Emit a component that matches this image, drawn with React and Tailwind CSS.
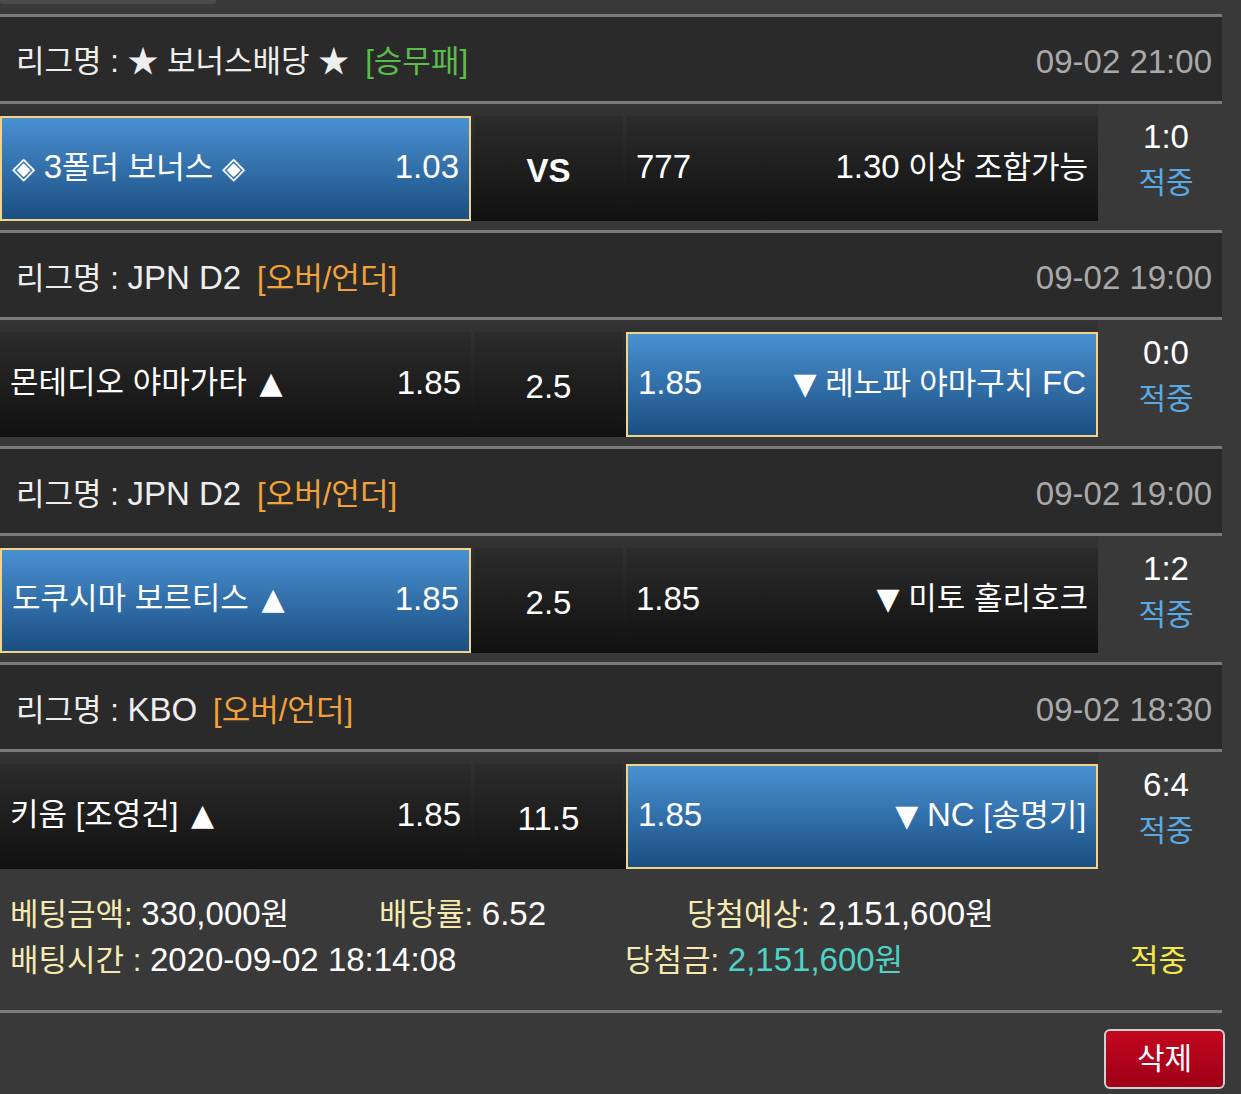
import React from "react";

const FONT = { fontFamily: '"Liberation Sans", "Noto Sans CJK KR", sans-serif' };

function N({ children, className = "" }) {
  return <span className={"text-[33px] " + className}>{children}</span>;
}

function Tri({ up }) {
  return (
    <span className={"font-['DejaVu_Sans'] text-[30px] " + (up ? "ml-[4px]" : "")}>{up ? "▲" : "▼"}</span>
  );
}

function Dia() {
  return <span className="font-['DejaVu_Sans'] text-[30px]">◈</span>;
}

function Line() {
  return <div className="h-[3px] w-[1222px] bg-[#7a7a7a]" />;
}

function Header({ label, tag, tagColor, date }) {
  return (
    <div className="flex h-[84px] w-[1222px] items-center justify-between bg-[#2a2a2a] pl-[16px] pr-[10px] pt-[5px]">
      <div className="flex items-baseline text-[#eeeeee]">
        <span>{label}</span>
        <span className={"ml-[16px] " + tagColor}>{tag}</span>
      </div>
      <N className="text-[#a9a9a9]">{date}</N>
    </div>
  );
}

function Cell({ selected, className, children }) {
  const base = selected
    ? "border-2 border-[#f2d489] bg-gradient-to-b from-[#4a91d2] to-[#1b4f82]"
    : "bg-gradient-to-b from-[#2c2c2c] to-[#111111]";
  return (
    <div className={"flex h-[105px] items-center pb-[5px] text-white " + base + " " + className}>
      {children}
    </div>
  );
}

function Row({ left, leftOdds, mid, midBold, right, rightLabel, sel, score }) {
  return (
    <div className="flex h-[126px] w-[1222px]">
      <div className="flex h-[117px] w-[1098px] gap-[3px] bg-gradient-to-b from-[#353535] to-[#111111] pt-[12px]">
        <Cell selected={sel === "L"} className="w-[471px] justify-between pl-[10px] pr-[10px]">
          <span className="whitespace-nowrap">{left}</span>
          <N>{leftOdds}</N>
        </Cell>
        <Cell className={"w-[149px] justify-center " + (midBold ? "font-bold" : "")}>
          <N className="translate-y-[4px]">{mid}</N>
        </Cell>
        <Cell selected={sel === "R"} className="w-[472px] justify-between pl-[10px] pr-[10px]">
          <span className="whitespace-nowrap">{right}</span>
          <span className="whitespace-nowrap">{rightLabel}</span>
        </Cell>
      </div>
      <div className="flex w-[124px] flex-col items-center pl-[12px] pt-[10px] leading-[46px]">
        <N className="text-white">{score}</N>
        <span className="text-[30px] text-[#5ba8e2]">적중</span>
      </div>
    </div>
  );
}

export default function App() {
  return (
    <div className="min-h-[1094px] w-[1241px] bg-[#393939] text-[31px] leading-none" style={FONT}>
      <div className="h-[4px] w-[216px] rounded-b-[3px] bg-[#4a4a4a]" />
      <div className="h-[10px]" />
      <Line />
      <Header
        label={<>리그명 : ★ 보너스배당 ★</>}
        tag="[승무패]"
        tagColor="text-[#5cbb4e]"
        date="09-02 21:00"
      />
      <Line />
      <Row
        left={<><Dia /> <N>3</N>폴더 보너스 <Dia /></>}
        leftOdds="1.03"
        mid="VS"
        midBold
        right={<N>777</N>}
        rightLabel={<><N>1.30</N> 이상 조합가능</>}
        sel="L"
        score="1:0"
      />
      <Line />
      <Header label={<>리그명 : <N>JPN D2</N></>} tag="[오버/언더]" tagColor="text-[#f2a23a]" date="09-02 19:00" />
      <Line />
      <Row
        left={<>몬테디오 야마가타 <Tri up /></>}
        leftOdds="1.85"
        mid="2.5"
        right={<N>1.85</N>}
        rightLabel={<><Tri /> 레노파 야마구치 <N>FC</N></>}
        sel="R"
        score="0:0"
      />
      <Line />
      <Header label={<>리그명 : <N>JPN D2</N></>} tag="[오버/언더]" tagColor="text-[#f2a23a]" date="09-02 19:00" />
      <Line />
      <Row
        left={<>도쿠시마 보르티스 <Tri up /></>}
        leftOdds="1.85"
        mid="2.5"
        right={<N>1.85</N>}
        rightLabel={<><Tri /> 미토 홀리호크</>}
        sel="L"
        score="1:2"
      />
      <Line />
      <Header label={<>리그명 : <N>KBO</N></>} tag="[오버/언더]" tagColor="text-[#f2a23a]" date="09-02 18:30" />
      <Line />
      <Row
        left={<>키움 [조영건] <Tri up /></>}
        leftOdds="1.85"
        mid="11.5"
        right={<N>1.85</N>}
        rightLabel={<><Tri /> <N>NC</N> [송명기]</>}
        sel="R"
        score="6:4"
      />
      <div className="flex h-[132px] w-[1222px] flex-col pl-[10px] pt-[13px] leading-[45px]">
        <div className="flex items-baseline">
          <span className="w-[369px]">
            <span className="text-[#f6eab0]">베팅금액: </span>
            <span className="text-white"><N>330,000</N>원</span>
          </span>
          <span className="w-[308px]">
            <span className="text-[#f6eab0]">배당률: </span>
            <N className="text-white">6.52</N>
          </span>
          <span>
            <span className="text-[#f6eab0]">당첨예상: </span>
            <span className="text-white"><N>2,151,600</N>원</span>
          </span>
        </div>
        <div className="flex items-baseline">
          <span className="w-[615px]">
            <span className="text-[#f6eab0]">배팅시간 : </span>
            <N className="text-white">2020-09-02 18:14:08</N>
          </span>
          <span className="w-[505px]">
            <span className="text-[#f6eab0]">당첨금: </span>
            <span className="text-[#4fd2c6]"><N>2,151,600</N>원</span>
          </span>
          <span className="text-[#f4e84a]">적중</span>
        </div>
      </div>
      <Line />
      <div className="flex w-[1241px] justify-end pr-[16px] pt-[16px]">
        <button className="flex h-[60px] w-[121px] items-center justify-center rounded-[6px] border-2 border-[#d0d0d0] bg-gradient-to-b from-[#c2081f] to-[#9e0018] text-[30px] text-white">
          삭제
        </button>
      </div>
    </div>
  );
}
